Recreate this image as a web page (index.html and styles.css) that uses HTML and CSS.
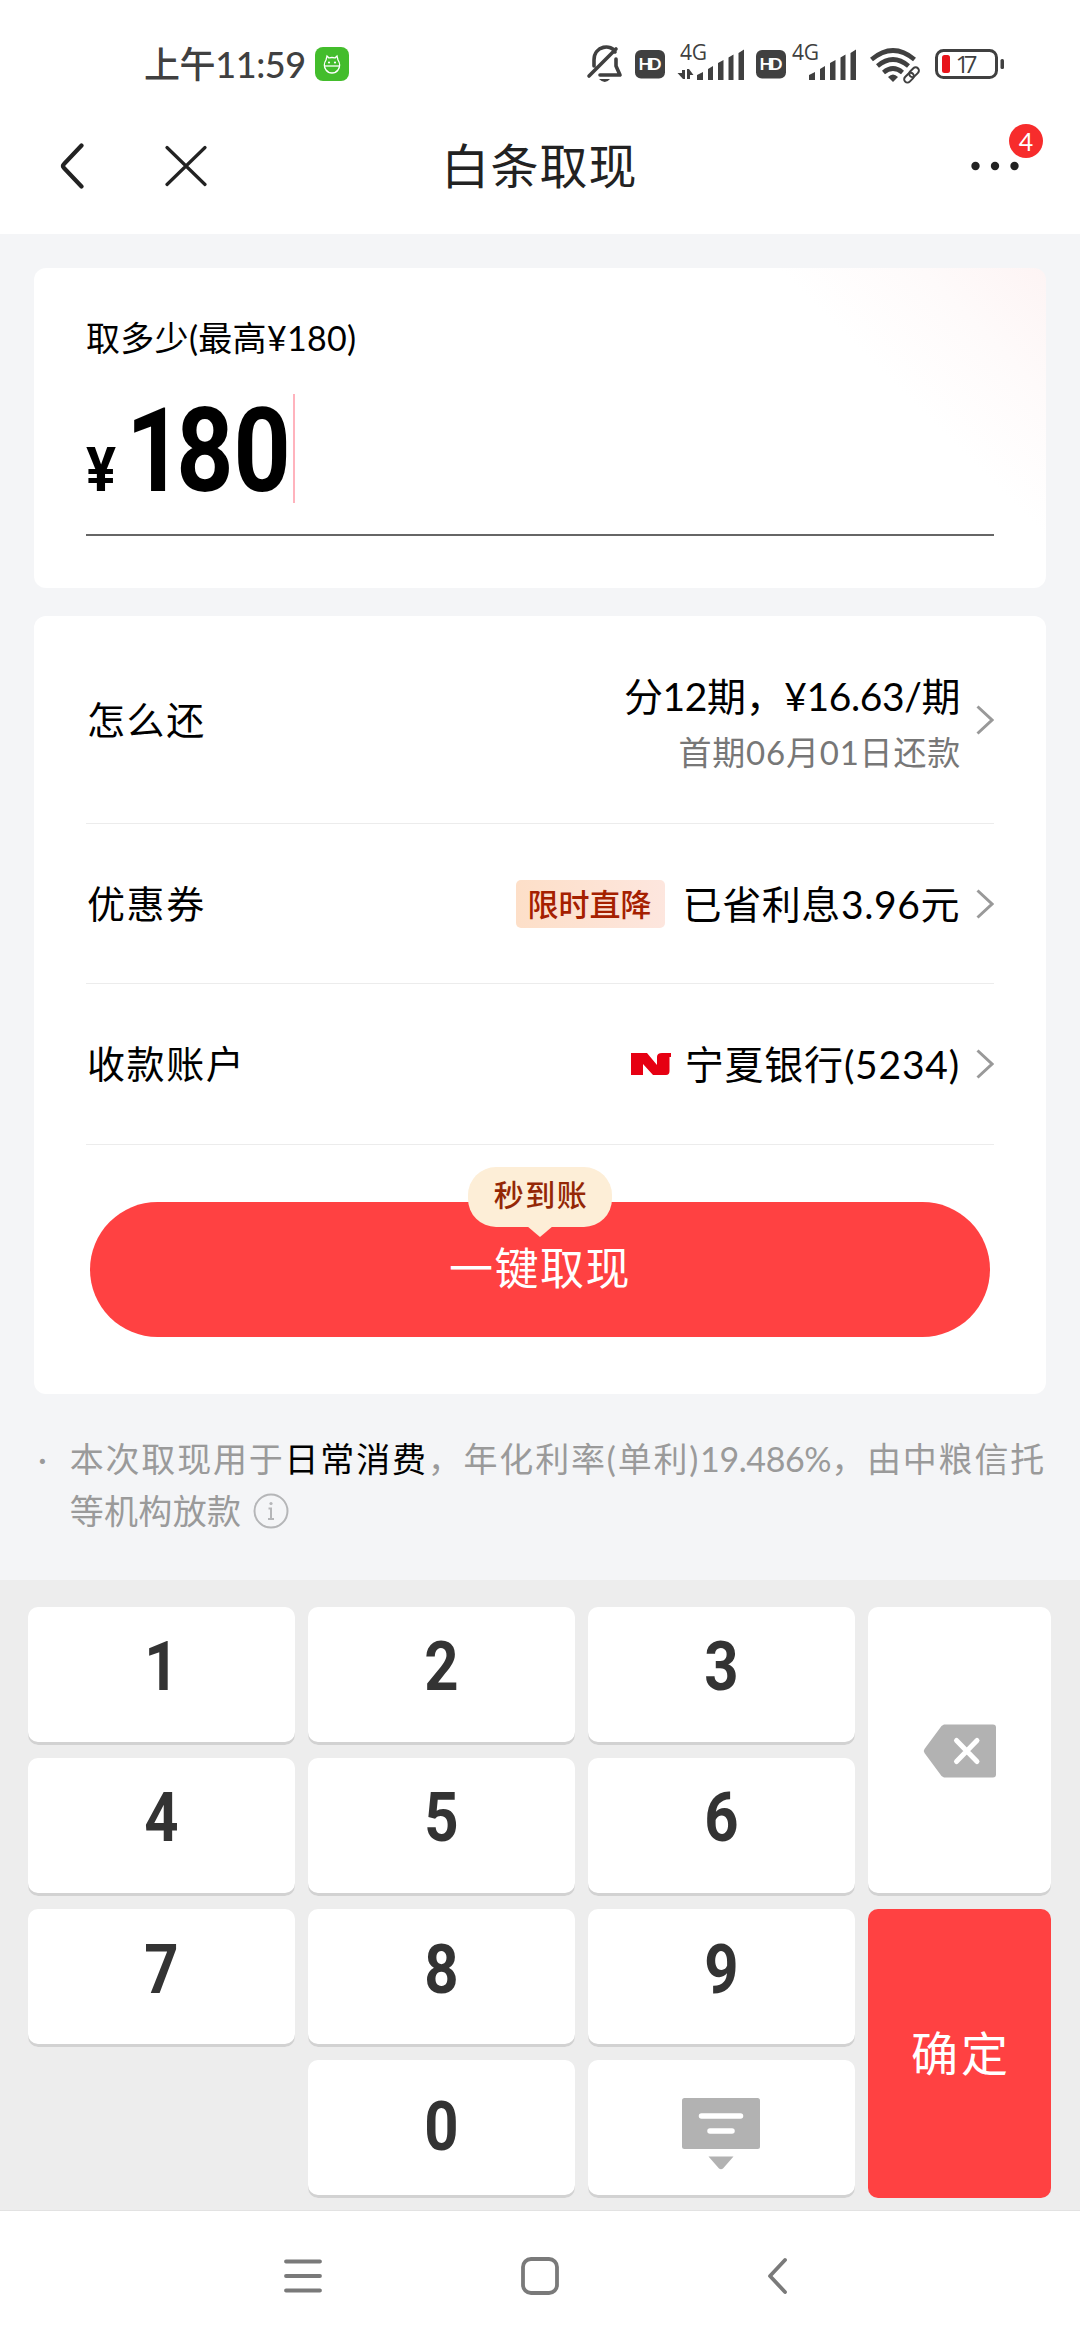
FILE: index.html
```html
<!DOCTYPE html>
<html lang="zh-CN">
<head>
<meta charset="utf-8">
<title>白条取现</title>
<link rel="stylesheet" href="styles.css">
</head>
<body>
<div class="screen">
  <header class="status">
    <div class="status-left">
      <span class="clock">上午11:59</span>
      <svg class="app-badge" width="34" height="34" viewBox="0 0 34 34"><rect width="34" height="34" rx="8" fill="#43bd2c"/><g fill="none" stroke="#fff" stroke-width="1.3"><path d="M11 13C9 16 9 20 11 23C14 27 20 27 23 23C25 20 25 16 23 13L22 9L20 11Q17 10 14 11L12 9Z"/><path d="M9.500 19H24.500"/></g><circle cx="14" cy="15.500" r="1.100" fill="#fff"/><circle cx="20" cy="15.500" r="1.100" fill="#fff"/></svg>
    </div>
    <svg class="status-icons" width="424" height="64" viewBox="584 32 424 64">
      <g fill="none" stroke="#404040" stroke-width="3.600" stroke-linecap="round" stroke-linejoin="round">
        <path d="M594 66V60C594 45 612 44 615 52M616 59V66L620 75H600M589 76L616 49"/>
      </g>
      <path d="M599 79H610Q605 85 599 79" fill="#404040"/>
      <g fill="#404040">
        <rect x="635" y="50" width="30" height="28.500" rx="6"/><rect x="756" y="50" width="30" height="28.500" rx="6"/>
        <g id="bars"><path d="M697 75L703 72V80H697ZM708 69L713 66V80H708ZM718 63L723.500 60V80H718ZM728.500 57.500L733.500 54.500V80H728.500ZM738.500 53L744 49.500V80H738.500Z"/></g>
        <use href="#bars" x="112"/>
        <path d="M682 70H685V79H683L677.500 73H682ZM687 79V69H689L693.500 75H690V79Z"/>
        <rect x="1000.500" y="59" width="3.500" height="10" rx="1.500"/>
      </g>
      <g class="hd"><text x="638.500" y="70" textLength="23">HD</text><text x="759.500" y="70" textLength="23">HD</text></g>
      <g class="net"><text x="680" y="60" textLength="27">4G</text><text x="792" y="60" textLength="27">4G</text></g>
      <g fill="none" stroke="#404040" stroke-width="4.600"><path d="M871.500 59.500Q893 41.500 914.500 59.500"/><path d="M877.500 66Q893 53 908.500 66"/><path d="M883.500 72.500Q893 64.500 902.500 72.500"/></g>
      <path d="M888 77Q893 72 898 77L893 82Z" fill="#404040"/>
      <g fill="none" stroke="#404040" stroke-width="2"><rect x="908.500" y="69" width="11" height="6.500" rx="3.200" transform="rotate(-45 914 72.200)"/><rect x="903.500" y="74.500" width="11" height="6.500" rx="3.200" transform="rotate(-45 909 77.700)"/></g>
      <rect x="936.500" y="50.500" width="60" height="27" rx="7" fill="#fff" stroke="#404040" stroke-width="3"/>
      <rect x="942" y="55" width="8" height="18" rx="2.500" fill="#e8141b"/>
      <text class="pct" x="955.500" y="73" textLength="22">17</text>
    </svg>
  </header>

  <nav class="titlebar">
    <div class="title-left">
      <svg width="24" height="46" viewBox="0 0 24 46"><path d="M21.500 2.500L4 21Q2 23 4 25L21.500 43.500" fill="none" stroke="#222" stroke-width="4.200" stroke-linecap="round"/></svg>
      <svg width="42" height="42" viewBox="0 0 42 42"><path d="M2 2.500L40 39.500M40 2.500L2 39.500" stroke="#222" stroke-width="3.200" stroke-linecap="round"/></svg>
    </div>
    <h1>白条取现</h1>
    <div class="more">
      <svg width="48" height="10" viewBox="0 0 48 10" fill="#222"><circle cx="4.500" cy="5" r="4.200"/><circle cx="24" cy="5" r="4.200"/><circle cx="43.500" cy="5" r="4.200"/></svg>
      <span class="count">4</span>
    </div>
  </nav>

  <main class="content">
    <section class="card amount-card">
      <p class="amount-label">取多少(最高¥180)</p>
      <div class="amount"><span class="currency">¥</span><span class="value"><span class="lead">1</span>80</span><i class="caret"></i></div>
    </section>

    <section class="card detail-card">
      <div class="row row-tall">
        <span class="name">怎么还</span>
        <div class="plan"><div class="plan-main">分12期，¥16.63/期</div><div class="plan-sub">首期06月01日还款</div></div>
        <svg class="arrow" viewBox="0 0 18 30"><path d="M1.500 1.500L16 15L1.500 28.500"/></svg>
      </div>
      <div class="row">
        <span class="name">优惠券</span>
        <span class="tag">限时直降</span>
        <span class="val saved">已省利息3.96元</span>
        <svg class="arrow" viewBox="0 0 18 30"><path d="M1.500 1.500L16 15L1.500 28.500"/></svg>
      </div>
      <div class="row row-last">
        <span class="name">收款账户</span>
        <svg class="bank-logo" width="40" height="22" viewBox="0 0 40 22"><path d="M0 0H16L26 12V4Q26 0 31 0H40V4H38.500V18Q38.500 22 35 22H22L12 11V22H0Z" fill="#e60012"/></svg>
        <span class="val bank">宁夏银行(5234)</span>
        <svg class="arrow" viewBox="0 0 18 30"><path d="M1.500 1.500L16 15L1.500 28.500"/></svg>
      </div>
      <div class="cta"><span class="bubble">秒到账</span>一键取现</div>
    </section>

    <div class="note">
      <span class="dot">·</span>
      <div class="note-text">
        <div class="line line-full">本次取现用于<b>日常消费</b>，年化利率(单利)<span class="rate">19.486%</span>，由中粮信托</div>
        <div class="line">等机构放款<svg class="info" width="36" height="36" viewBox="0 0 36 36"><g fill="none" stroke="#b5b6b8" stroke-width="2"><circle cx="18" cy="18" r="16.500"/><path d="M15.500 15.500H18V26M15 26H21"/></g><circle cx="18" cy="10.500" r="1.600" fill="#b5b6b8"/></svg></div>
      </div>
    </div>
  </main>

  <section class="keypad">
    <div class="key"><span>1</span></div>
    <div class="key"><span>2</span></div>
    <div class="key"><span>3</span></div>
    <div class="key key-del"><svg width="74" height="54" viewBox="0 0 74 54"><path d="M21 0.500H70Q73 0.500 73 3.500V50.500Q73 53.500 70 53.500H21L18.500 52L1.500 29Q0 27 1.500 25L18.500 2Z" fill="#b2b2b2"/><path d="M33.500 16.500L54 37.500M54 16.500L33.500 37.500" stroke="#fff" stroke-width="5" stroke-linecap="round"/></svg></div>
    <div class="key"><span>4</span></div>
    <div class="key"><span>5</span></div>
    <div class="key"><span>6</span></div>
    <div class="key"><span>7</span></div>
    <div class="key"><span>8</span></div>
    <div class="key"><span>9</span></div>
    <div class="key key-ok">确定</div>
    <div class="key key-zero"><span>0</span></div>
    <div class="key key-hide"><svg width="78" height="73" viewBox="0 0 78 73"><rect width="78" height="51" rx="2.500" fill="#b2b2b2"/><path d="M19.500 18H58.500M28 33H50" stroke="#fff" stroke-width="5.500" stroke-linecap="round"/><path d="M26.500 58.500H51.500L41 70.500Q39 72 37 70.500Z" fill="#b2b2b2"/></svg></div>
  </section>

  <footer class="sysnav">
    <svg width="40" height="40" viewBox="0 0 40 40"><path d="M3 5.500H37M3 20H37M3 34.500H37"/></svg>
    <svg width="40" height="40" viewBox="0 0 40 40"><rect x="3" y="3" width="34" height="34" rx="8"/></svg>
    <svg width="40" height="40" viewBox="0 0 40 40"><path d="M28 4L13 20L28 36"/></svg>
  </footer>
</div>
</body>
</html>
```

FILE: styles.css
```css
* { box-sizing: border-box; margin: 0; padding: 0; }
body { background: #fff; }
svg { display: block; flex: none; }
.screen {
  width: 1080px; height: 2340px; overflow: hidden;
  display: flex; flex-direction: column;
  background: #f4f5f7; color: #000;
  font-family: Lato, "Noto Sans CJK SC", sans-serif;
}

.status { height: 112px; padding: 16px 72px 0 144px; background: #fff; display: flex; align-items: center; justify-content: space-between; }
.status-left { display: flex; align-items: center; gap: 9px; }
.clock { font-size: 36px; line-height: 44px; color: #404040; white-space: nowrap; font-weight: 500; letter-spacing: -.4px; }
.hd text { font: 700 17px Lato, sans-serif; fill: #fff; }
.net text { font: 400 21px "Open Sans", sans-serif; fill: #404040; }
.pct { font: 400 24px "Open Sans", sans-serif; fill: #404040; }

.titlebar { height: 122px; padding: 0 61px 14px 60px; background: #fff; display: grid; grid-template-columns: 1fr auto 1fr; align-items: center; }
.title-left { display: flex; align-items: center; gap: 81px; }
h1 { font-size: 48px; line-height: 60px; font-weight: 400; color: #222; letter-spacing: 1.1px; }
.more { justify-self: end; position: relative; }
.count { position: absolute; left: 38px; top: -37px; width: 34px; height: 34px; border-radius: 17px; background: #f72c2c; color: #fff; font-size: 25px; line-height: 34px; text-align: center; }

.content { height: 1346px; padding: 34px 34px 0; display: flex; flex-direction: column; }
.card { background: #fff; border-radius: 12px; }
.amount-card { height: 320px; padding: 46px 52px 52px; margin-bottom: 28px; background: linear-gradient(225deg, #fdf4f4 0, #fefafa 90px, #fff 190px); display: flex; flex-direction: column; }
.amount-label { font-size: 34px; line-height: 48px; letter-spacing: .3px; }
.amount { flex: 1; display: flex; align-items: flex-end; border-bottom: 2px solid #666; padding-bottom: 31px; }
.currency { font: 700 61px/84px Roboto, sans-serif; width: 40px; transform: scaleX(.92); transform-origin: 0 50%; margin-bottom: -9px; }
.value { font: 700 116px/110px Roboto, sans-serif; width: 167px; margin-bottom: -3px; white-space: nowrap; transform: scaleX(.86); transform-origin: 0 50%; }
.lead { letter-spacing: -8px; }
.caret { width: 2px; height: 109px; background: #ffb3bd; }

.detail-card { height: 778px; padding: 0 52px; }
.row { height: 160px; border-bottom: 1px solid #ececec; display: flex; align-items: center; }
.row-tall { height: 208px; }
.row-last { height: 161px; }
.name { flex: 1; font-size: 38px; line-height: 54px; letter-spacing: 1.6px; padding: 0 0 2px 1px; }
.plan { margin-top: 9px; text-align: right; line-height: 56px; }
.plan-main { font-size: 39px; letter-spacing: -.4px; }
.plan-sub { font-size: 33px; color: #777; letter-spacing: .8px; margin-right: -1px; }
.arrow { width: 18px; height: 30px; margin: 0 0 0 16px; fill: none; stroke: #999; stroke-width: 3; }
.tag { font-size: 31px; line-height: 48px; padding: 0 12px; width: 149px; white-space: nowrap; border-radius: 5px; background: linear-gradient(90deg, #fddfc8, #fde6de); color: #a52000; font-weight: 500; margin-right: 18px; }
.val { font-size: 39px; line-height: 56px; }
.saved { letter-spacing: .6px; }
.bank { letter-spacing: .8px; }
.bank-logo { margin-right: 14px; }
.cta { position: relative; margin: 57px 4px 0; height: 135px; border-radius: 68px; background: #ff4142; color: #fff; font-size: 44px; line-height: 132px; text-align: center; letter-spacing: 1.5px; }
.bubble { position: absolute; left: 378px; top: -35px; width: 144px; height: 60px; border-radius: 28px; background: #fdeed7; color: #942706; font-size: 30px; line-height: 55px; font-weight: 500; letter-spacing: 1.5px; padding-left: 2px; }
.bubble::after { content: ""; position: absolute; left: 59px; top: 59px; border: 13px solid transparent; border-top: 11px solid #fdeed7; border-bottom: 0; }

.note { display: flex; padding-top: 39px; color: #9a9a9a; font-size: 34px; line-height: 52px; }
.dot { width: 37px; padding-left: 4px; }
.line { display: flex; align-items: center; white-space: nowrap; letter-spacing: .3px; }
.line-full { letter-spacing: 1.8px; }
.line b { font-weight: 400; color: #000; }
.rate { letter-spacing: -.4px; }
.info { margin-left: 12px; }

.keypad { height: 630px; background: #ededed; padding: 27px 29px 12px 28px; display: grid; grid-template-columns: 266.5px 266.5px 266.5px 183px; grid-template-rows: repeat(4, 137.750px); column-gap: 13.500px; row-gap: 13.330px; }
.key { background: #fff; border-radius: 10px; box-shadow: inset 0 -3px 0 #d2d2d2; display: flex; align-items: center; justify-content: center; color: #333; padding-bottom: 17px; }
.key span { font: 700 68px/80px Roboto, sans-serif; transform: scaleX(.88); }
.key-del { grid-row: 1 / 3; grid-column: 4; padding-bottom: 0; }
.key-ok { grid-row: 3 / 5; grid-column: 4; background: #ff4142; box-shadow: none; color: #fff; font-size: 47px; letter-spacing: 3px; padding: 0 0 7px 3px; }
.key-zero { grid-column: 2; padding-bottom: 4px; }
.key-hide { padding: 10px 0 0; }

.sysnav { height: 130px; background: #fff; border-top: 1px solid #e2e2e2; display: flex; justify-content: center; align-items: center; gap: 197px; }
.sysnav svg { fill: none; stroke: #7a7a7a; stroke-width: 3.800; stroke-linecap: round; stroke-linejoin: round; }
```
